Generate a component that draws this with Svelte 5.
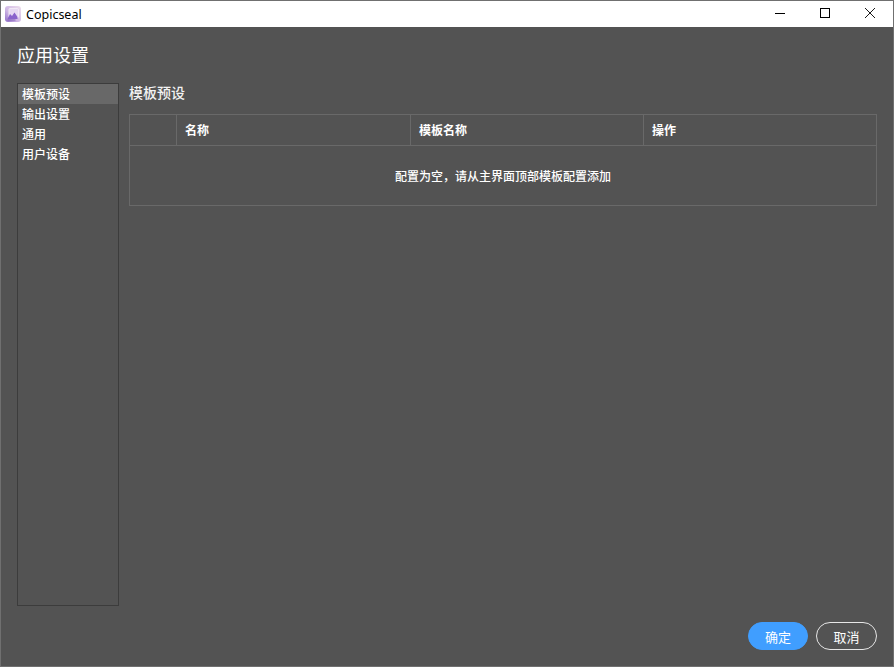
<script lang="ts">
	const navItems = ['模板预设', '输出设置', '通用', '用户设备'];
	let active = $state(0);
</script>

<div class="window">
	<header class="titlebar">
		<svg class="app-icon" viewBox="0 0 16 16" width="16" height="16" aria-hidden="true">
			<defs>
				<linearGradient id="logo" x1="1" y1="0" x2="0" y2="1">
					<stop offset="0" stop-color="#efe0ee" />
					<stop offset=".6" stop-color="#cdb4e4" />
					<stop offset="1" stop-color="#8f6cc8" />
				</linearGradient>
			</defs>
			<rect width="16" height="16" rx="3" fill="url(#logo)" />
			<rect x="4" y="2.500" width="9.500" height="9" rx="1" fill="#e6d8f2" stroke="#f6eff8" stroke-width=".8" />
			<path d="M2.500 13l2.500-5 2 2 2.500-3.500 3 4.500v2z" fill="#8a63cc" />
			<path d="M2.500 13.500h8v1h-8z" fill="#6a48a8" opacity=".7" />
		</svg>
		<span class="app-name">Copicseal</span>
		<div class="window-controls">
			<button class="win-btn" aria-label="最小化">
				<svg viewBox="0 0 10 10" width="10" height="10"><path d="M0 5.500h10" stroke="#000" fill="none" /></svg>
			</button>
			<button class="win-btn" aria-label="最大化">
				<svg viewBox="0 0 10 10" width="10" height="10"><rect x=".5" y=".5" width="9" height="9" stroke="#000" fill="none" /></svg>
			</button>
			<button class="win-btn" aria-label="关闭">
				<svg viewBox="0 0 10 10" width="10" height="10"><path d="M0 0l10 10M10 0L0 10" stroke="#000" stroke-width=".9" fill="none" /></svg>
			</button>
		</div>
	</header>

	<div class="content">
		<h1>应用设置</h1>

		<div class="panes">
			<nav class="sidebar">
				{#each navItems as item, i}
					<button class="nav-item" class:active={i === active} onclick={() => (active = i)}>{item}</button>
				{/each}
			</nav>

			<section class="main">
				<h2>模板预设</h2>
				<div class="table">
					<div class="row head">
						<div class="cell"></div>
						<div class="cell">名称</div>
						<div class="cell">模板名称</div>
						<div class="cell">操作</div>
					</div>
					<div class="empty">配置为空，请从主界面顶部模板配置添加</div>
				</div>
			</section>
		</div>

		<footer class="actions">
			<button class="btn primary">确定</button>
			<button class="btn">取消</button>
		</footer>
	</div>
</div>

<style>
	:global(body) {
		margin: 0;
		background: #535353;
	}

	.window {
		box-sizing: border-box;
		width: 894px;
		height: 667px;
		display: flex;
		flex-direction: column;
		border: 1px solid #707070;
		background: #535353;
		color: #fff;
		font-family: "Noto Sans CJK SC", "Liberation Sans", sans-serif;
		overflow: hidden;
	}

	.titlebar {
		flex: none;
		height: 26px;
		display: flex;
		align-items: center;
		background: #fff;
		color: #000;
		padding-left: 4px;
	}

	.app-icon {
		margin-right: 5px;
	}

	.app-name {
		font-family: "Noto Sans", "Liberation Sans", sans-serif;
		font-size: 12.500px;
	}

	.window-controls {
		margin-left: auto;
		display: flex;
		height: 100%;
		padding-right: 1px;
	}

	.win-btn {
		width: 45px;
		height: 100%;
		padding: 0 0 2px;
		border: none;
		background: none;
		display: flex;
		align-items: center;
		justify-content: center;
	}

	.content {
		flex: 1;
		min-height: 0;
		display: flex;
		flex-direction: column;
		padding: 15px 16px 16px;
	}

	h1 {
		margin: 0 0 15px;
		height: 26px;
		font-size: 18px;
		line-height: 24px;
		font-weight: 400;
	}

	.panes {
		flex: 1;
		min-height: 0;
		display: flex;
		gap: 10px;
	}

	.sidebar {
		box-sizing: border-box;
		flex: none;
		width: 102px;
		height: 523px;
		display: flex;
		flex-direction: column;
		border: 1px solid #3c3c3c;
	}

	.nav-item {
		height: 20px;
		padding: 0 4px;
		border: none;
		background: none;
		color: #fff;
		font: inherit;
		font-size: 12px;
		font-weight: 500;
		line-height: 20px;
		text-align: left;
	}

	.nav-item.active {
		background: #686868;
	}

	.main {
		flex: 1;
		min-width: 0;
	}

	h2 {
		margin: 0 0 12px;
		height: 19px;
		font-size: 14px;
		line-height: 19px;
		font-weight: 500;
		color: #f2f2f2;
	}

	.table {
		border: 1px solid #696969;
	}

	.row {
		box-sizing: border-box;
		display: grid;
		grid-template-columns: 46px 234px 233px 1fr;
		height: 31px;
		border-bottom: 1px solid #696969;
	}

	.cell {
		padding: 0 8px;
		border-left: 1px solid #696969;
		font-size: 12px;
		line-height: 29px;
		font-weight: 700;
	}

	.cell:first-child {
		border-left: none;
	}

	.empty {
		height: 59px;
		display: flex;
		align-items: center;
		justify-content: center;
		font-size: 12px;
		font-weight: 500;
	}

	.actions {
		display: flex;
		justify-content: flex-end;
		gap: 8px;
	}

	.btn {
		box-sizing: border-box;
		width: 61px;
		height: 28px;
		padding: 0;
		border: 1px solid #e6e6e6;
		border-radius: 14px;
		background: none;
		color: #fff;
		font: inherit;
		font-size: 13px;
	}

	.btn.primary {
		width: 60px;
		border-color: #409eff;
		background: #409eff;
	}
</style>
